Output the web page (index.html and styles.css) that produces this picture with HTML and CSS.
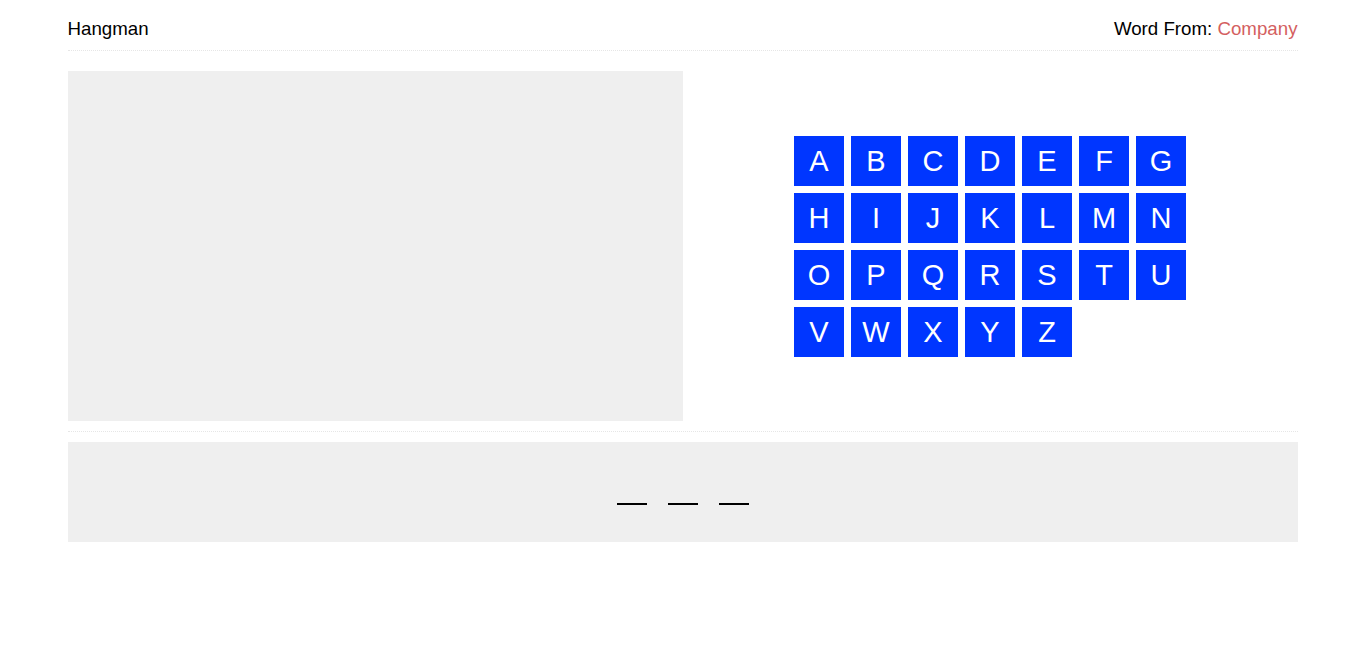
FILE: index.html
```html
<!DOCTYPE html>
<html lang="en">
<head>
<meta charset="utf-8">
<title>Hangman</title>
<link rel="stylesheet" href="styles.css">
</head>
<body>
<div class="container">
  <header class="header">
    <div class="title">Hangman</div>
    <div class="source">Word From: <span class="category">Company</span></div>
  </header>
  <section class="game">
    <div class="gallows"></div>
    <div class="keyboard-wrap">
      <div class="keyboard">
        <button class="key">A</button><button class="key">B</button><button class="key">C</button><button class="key">D</button><button class="key">E</button><button class="key">F</button><button class="key">G</button>
        <button class="key">H</button><button class="key">I</button><button class="key">J</button><button class="key">K</button><button class="key">L</button><button class="key">M</button><button class="key">N</button>
        <button class="key">O</button><button class="key">P</button><button class="key">Q</button><button class="key">R</button><button class="key">S</button><button class="key">T</button><button class="key">U</button>
        <button class="key">V</button><button class="key">W</button><button class="key">X</button><button class="key">Y</button><button class="key">Z</button>
      </div>
    </div>
  </section>
  <section class="word">
    <span class="slot"></span><span class="slot"></span><span class="slot"></span>
  </section>
</div>
</body>
</html>
```

FILE: styles.css
```css
html, body {
  margin: 0;
  padding: 0;
  background: #ffffff;
  font-family: "Liberation Sans", Arial, sans-serif;
  color: #000;
}

.container {
  width: 1230px;
  margin: 0 auto;
}

.header {
  display: flex;
  justify-content: space-between;
  align-items: center;
  padding: 18px 0 10px;
  line-height: 22px;
  font-size: 18.72px;
  border-bottom: 1px dotted #e6e6e6;
}

.category {
  color: #d45f5f;
}

.game {
  display: flex;
  margin-top: 20px;
  padding-bottom: 10px;
  border-bottom: 1px dotted #e6e6e6;
}

.gallows {
  width: 615px;
  height: 350px;
  background: #efefef;
}

.keyboard-wrap {
  flex: 1;
  display: flex;
  justify-content: center;
  align-items: center;
}

.keyboard {
  display: grid;
  grid-template-columns: repeat(7, 50px);
  grid-auto-rows: 50px;
  gap: 7px;
}

.key {
  margin: 0;
  padding: 0;
  border: none;
  background: #0036ff;
  color: #ffffff;
  font-family: "Liberation Sans", Arial, sans-serif;
  font-size: 29px;
  line-height: 50px;
  cursor: pointer;
}

.word {
  margin-top: 10px;
  height: 100px;
  background: #efefef;
  display: flex;
  justify-content: center;
  align-items: center;
  gap: 21px;
}

.slot {
  display: block;
  width: 30px;
  height: 26px;
  box-sizing: border-box;
  border-bottom: 2px solid #000;
}
```
